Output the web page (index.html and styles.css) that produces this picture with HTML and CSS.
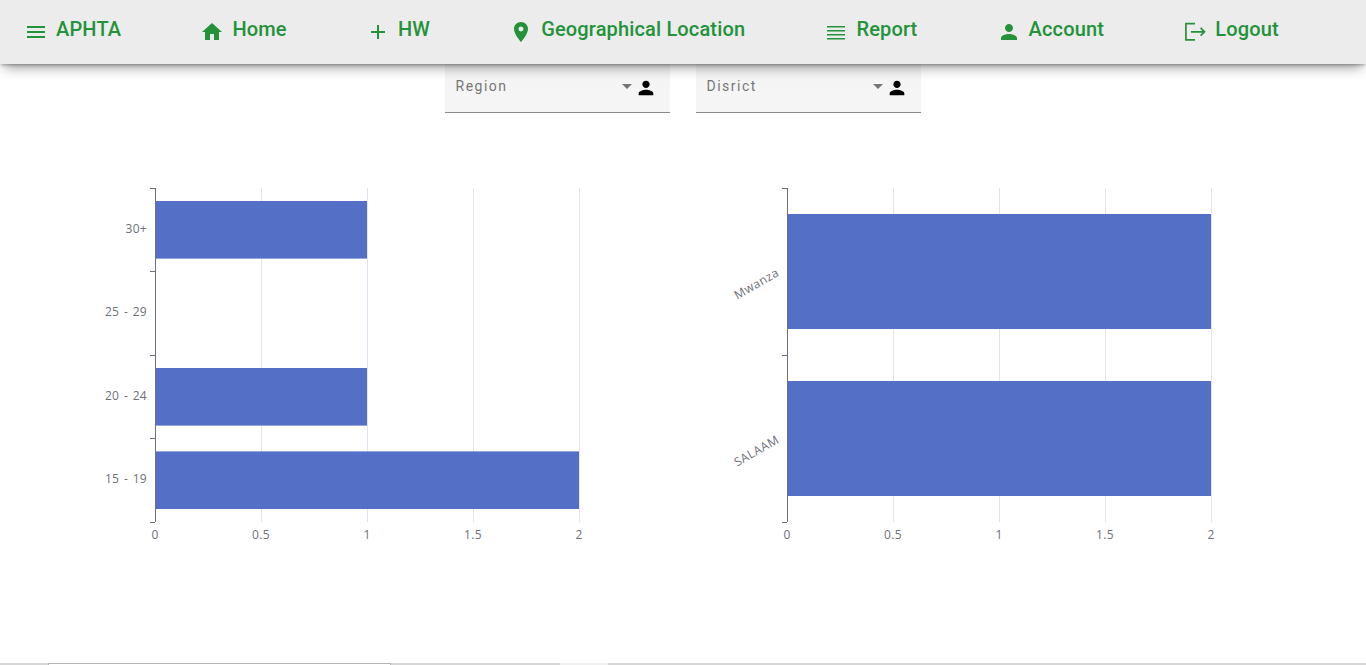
FILE: index.html
```html
<!DOCTYPE html>
<html>

<head>
    <title>APHTA</title>
    <link rel="stylesheet" href="styles.css">
</head>

<body>
    <nav class="topbar">
        <a class="nav-item">
            <svg viewBox="0 0 24 24"><path d="M3 18h18v-2H3v2zm0-5h18v-2H3v2zm0-7v2h18V6H3z"/></svg>
            <span>APHTA</span>
        </a>
        <a class="nav-item">
            <svg viewBox="0 0 24 24"><path d="M10 20v-6h4v6h5v-8h3L12 3 2 12h3v8z"/></svg>
            <span>Home</span>
        </a>
        <a class="nav-item">
            <svg viewBox="0 0 24 24"><path d="M19 13h-6v6h-2v-6H5v-2h6V5h2v6h6v2z"/></svg>
            <span>HW</span>
        </a>
        <a class="nav-item">
            <svg viewBox="0 0 24 24"><path d="M12 2C8.13 2 5 5.13 5 9c0 5.25 7 13 7 13s7-7.75 7-13c0-3.87-3.13-7-7-7zm0 9.5a2.5 2.5 0 0 1 0-5 2.5 2.5 0 0 1 0 5z"/></svg>
            <span>Geographical Location</span>
        </a>
        <a class="nav-item">
            <svg viewBox="0 0 24 24"><path d="M3 7.5h18V6H3zm0 4h18V10H3zm0 4h18V14H3zm0 4h18V18H3z"/></svg>
            <span>Report</span>
        </a>
        <a class="nav-item">
            <svg viewBox="0 0 24 24"><path d="M12 12c2.21 0 4-1.79 4-4s-1.79-4-4-4-4 1.79-4 4 1.79 4 4 4zm0 2c-2.67 0-8 1.34-8 4v2h16v-2c0-2.66-5.33-4-8-4z"/></svg>
            <span>Account</span>
        </a>
        <a class="nav-item">
            <svg class="icon-line" viewBox="0 0 24 24"><path d="M12 3.6H2.9v16.2H12M8 11.8h13.5M17.6 7.9l3.9 3.9-3.9 3.9"/></svg>
            <span>Logout</span>
        </a>
    </nav>

    <div class="filters">
        <div class="select-field">
            <span class="select-label">Region</span>
            <span class="select-arrow"></span>
            <svg class="select-icon" viewBox="0 0 24 24"><path d="M12 12c2.21 0 4-1.79 4-4s-1.79-4-4-4-4 1.79-4 4 1.79 4 4 4zm0 2c-2.67 0-8 1.34-8 4v2h16v-2c0-2.66-5.33-4-8-4z"/></svg>
        </div>
        <div class="select-field">
            <span class="select-label">Disrict</span>
            <span class="select-arrow"></span>
            <svg class="select-icon" viewBox="0 0 24 24"><path d="M12 12c2.21 0 4-1.79 4-4s-1.79-4-4-4-4 1.79-4 4 1.79 4 4 4zm0 2c-2.67 0-8 1.34-8 4v2h16v-2c0-2.66-5.33-4-8-4z"/></svg>
        </div>
    </div>

    <div class="charts">
        <svg class="chart" viewBox="90 180 632 380">
            <path class="grid-line" d="M261.5 188V522M367.5 188V522M473.5 188V522M579.5 188V522"/>
            <rect class="bar" x="155" y="201" width="212" height="57.6"/>
            <rect class="bar" x="155" y="368" width="212" height="57.6"/>
            <rect class="bar" x="155" y="451.4" width="424" height="57.6"/>
            <path class="axis" d="M155.5 188V522M150 188.5H155M150 271.5H155M150 355.5H155M150 438.5H155M150 522.5H155"/>
            <text class="tick tick-y" x="147" y="233">30+</text>
            <text class="tick tick-y" x="147" y="316">25 - 29</text>
            <text class="tick tick-y" x="147" y="400">20 - 24</text>
            <text class="tick tick-y" x="147" y="483">15 - 19</text>
            <text class="tick tick-x" x="155" y="539">0</text>
            <text class="tick tick-x" x="261" y="539">0.5</text>
            <text class="tick tick-x" x="367" y="539">1</text>
            <text class="tick tick-x" x="473" y="539">1.5</text>
            <text class="tick tick-x" x="579" y="539">2</text>
        </svg>
        <svg class="chart" viewBox="722 180 632 380">
            <defs>
                <clipPath id="label-clip"><rect x="733" y="180" width="60" height="380"/></clipPath>
            </defs>
            <path class="grid-line" d="M893.5 188V522M999.5 188V522M1105.5 188V522M1211.5 188V522"/>
            <rect class="bar" x="787" y="214" width="424" height="115"/>
            <rect class="bar" x="787" y="381" width="424" height="115"/>
            <path class="axis" d="M787.5 188V522M782 188.5H787M782 355.5H787M782 522.5H787"/>
            <g clip-path="url(#label-clip)">
                <text class="tick tick-y tick-slanted" transform="translate(780 275) rotate(-30)">Mwanza</text>
                <text class="tick tick-y tick-slanted" transform="translate(780 442) rotate(-30)">DAR ES SALAAM</text>
            </g>
            <text class="tick tick-x" x="787" y="539">0</text>
            <text class="tick tick-x" x="893" y="539">0.5</text>
            <text class="tick tick-x" x="999" y="539">1</text>
            <text class="tick tick-x" x="1105" y="539">1.5</text>
            <text class="tick tick-x" x="1211" y="539">2</text>
        </svg>
    </div>

    <div class="bottom-strip">
        <span class="strip-tab"></span>
        <span class="strip-thumb"></span>
    </div>
</body>

</html>
```
FILE: styles.css
```css
html, body {
    height: 100%;
}

body {
    margin: 0;
    display: flex;
    flex-direction: column;
    overflow: hidden;
    background-color: #ffffff;
    font-family: Roboto, sans-serif;
}

.topbar {
    position: relative;
    z-index: 2;
    flex: none;
    display: flex;
    align-items: center;
    gap: 79.2px;
    height: 64px;
    padding-left: 24px;
    background-color: #ececec;
    box-shadow: 0 7px 12px -4px rgba(0, 0, 0, 0.42), 0 2px 3px -1px rgba(0, 0, 0, 0.3);
    box-sizing: border-box;
}

.nav-item {
    display: flex;
    align-items: center;
    gap: 8px;
    color: #23923a;
    font-size: 20px;
    font-weight: 500;
    letter-spacing: 0.15px;
    line-height: 24px;
}

.nav-item span {
    position: relative;
    top: -3px;
}

.nav-item svg {
    width: 24px;
    height: 24px;
    fill: currentColor;
}

.nav-item .icon-line {
    fill: none;
    stroke: currentColor;
    stroke-width: 1.7;
}

.filters {
    flex: none;
    display: flex;
    justify-content: center;
    gap: 26px;
}

.select-field {
    display: flex;
    align-items: center;
    width: 225px;
    height: 49px;
    padding: 0 15px 4px 10.5px;
    background-color: #f5f5f5;
    border-bottom: 1px solid #8c8c8c;
    box-sizing: border-box;
}

.select-label {
    flex: 1;
    color: #757575;
    font-size: 14px;
    letter-spacing: 1.5px;
}

.select-arrow {
    width: 0;
    height: 0;
    margin-right: 3px;
    border-left: 5.5px solid transparent;
    border-right: 5.5px solid transparent;
    border-top: 5px solid #757575;
}

.select-icon {
    width: 22px;
    height: 22px;
    margin-top: 4px;
    margin-right: -2px;
}

.charts {
    flex: none;
    display: flex;
    margin-top: 67px;
    padding-left: 90px;
}

.chart {
    width: 632px;
    height: 380px;
}

.grid-line {
    fill: none;
    stroke: #e4e4ee;
}

.bar {
    fill: #546fc6;
}

.axis {
    fill: none;
    stroke: #6e7079;
}

.tick {
    fill: #6e7079;
    font-family: "Open Sans", sans-serif;
    font-size: 12px;
    letter-spacing: 0.3px;
    word-spacing: 1.2px;
}

.tick-y {
    text-anchor: end;
}

.tick-x {
    text-anchor: middle;
}

.tick-slanted {
    letter-spacing: 0.5px;
}

.bottom-strip {
    flex: none;
    display: flex;
    height: 2px;
    margin-top: auto;
    background-color: #d6d6d6;
}

.strip-tab {
    width: 343px;
    margin-left: 48px;
    background-color: #ffffff;
    border: 1px solid #b5b5b5;
    border-bottom: none;
    box-sizing: border-box;
}

.strip-thumb {
    width: 48px;
    margin-left: 169px;
    background-color: #f0f0f0;
}
```
